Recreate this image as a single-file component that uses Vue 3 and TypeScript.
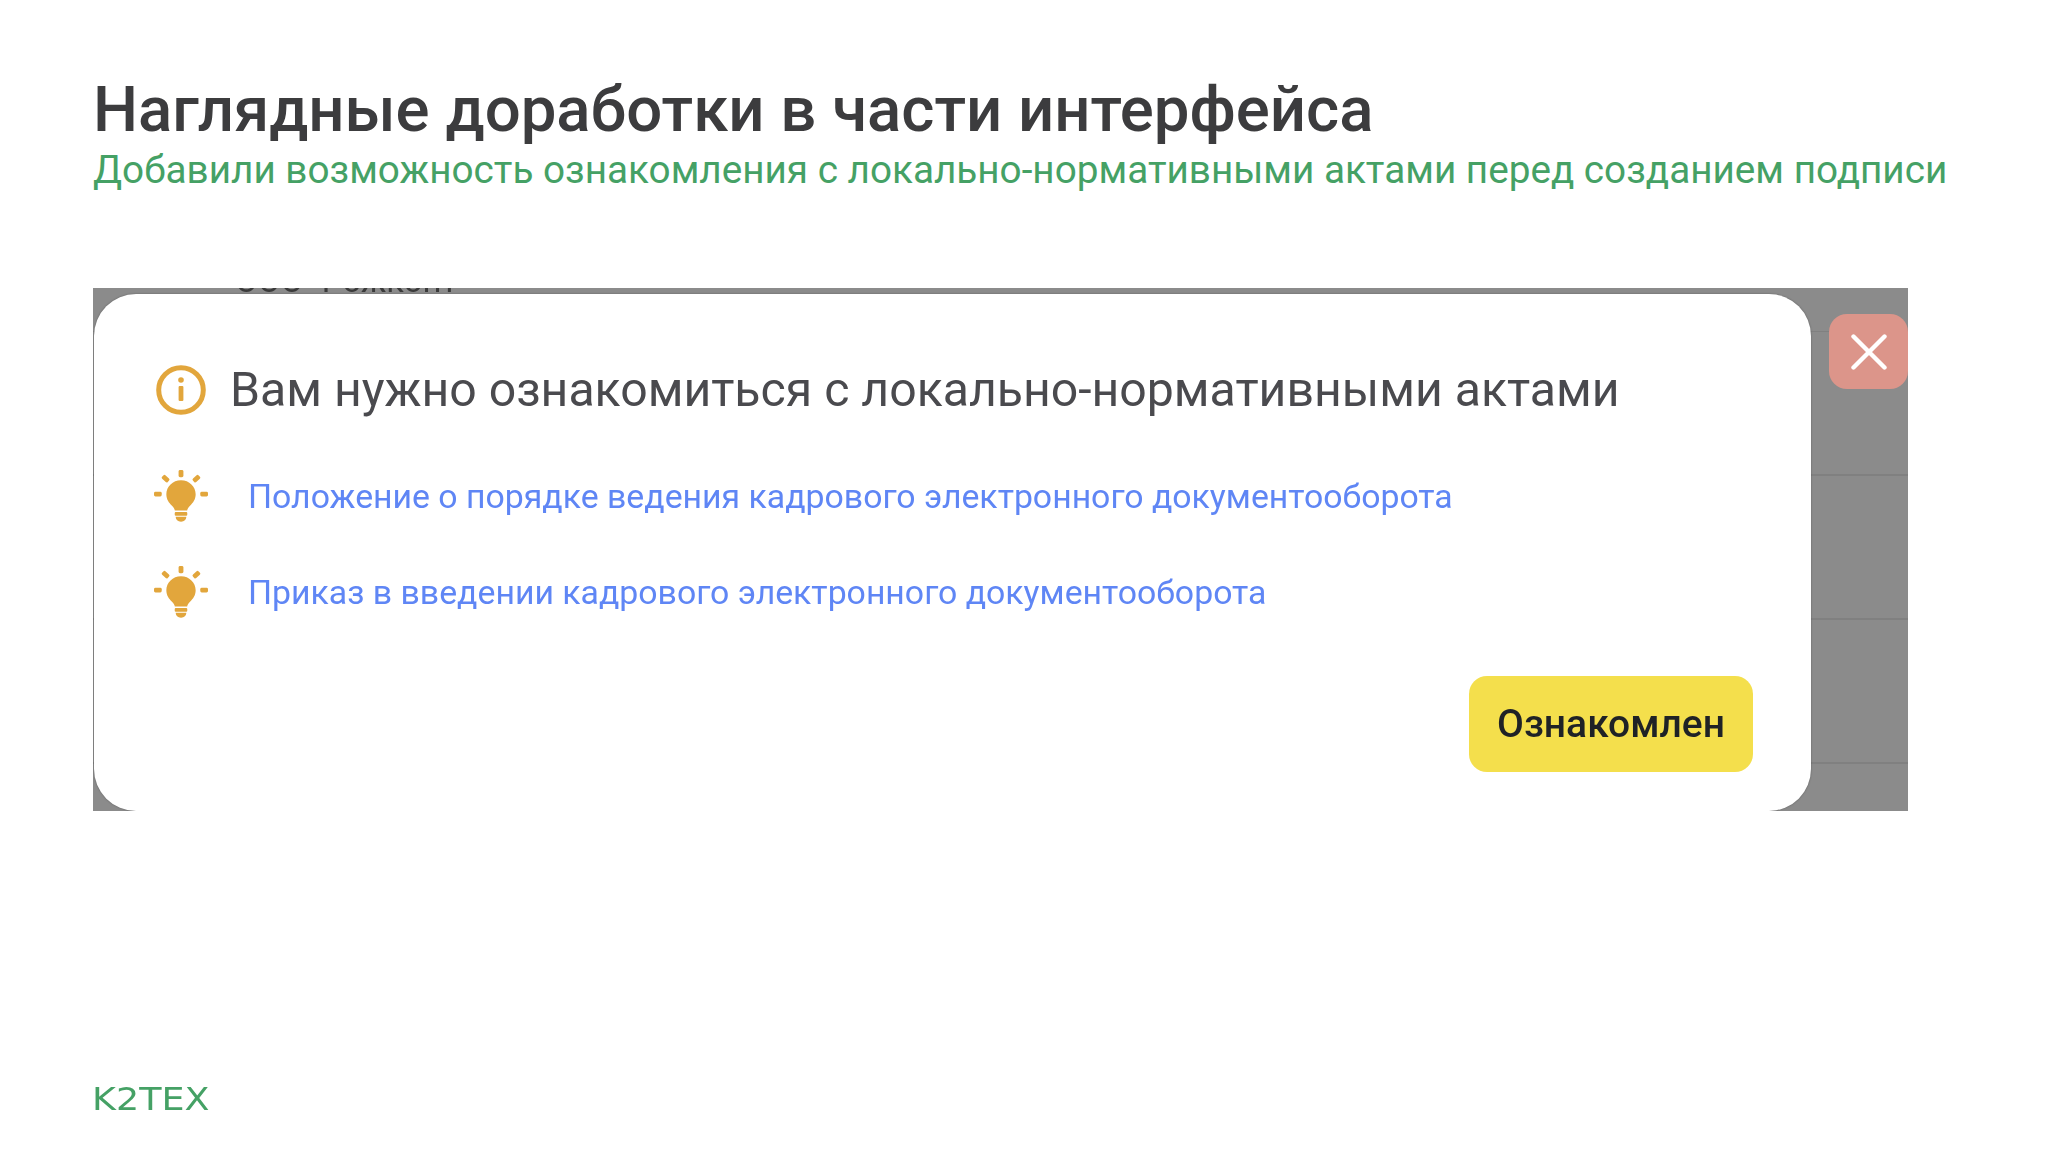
<script setup lang="ts">
const links: string[] = [
  'Положение о порядке ведения кадрового электронного документооборота',
  'Приказ в введении кадрового электронного документооборота',
]
</script>

<template>
  <main class="slide">
    <header class="head">
      <h1 class="title">Наглядные доработки в части интерфейса</h1>
      <p class="subtitle">Добавили возможность ознакомления с локально-нормативными актами перед созданием подписи</p>
    </header>

    <section class="shot">
      <div class="rows" aria-hidden="true">
        <div class="row row-first"><span class="clipped">ООО "Рожкопт"</span></div>
        <div class="row"></div>
        <div class="row"></div>
        <div class="row"></div>
      </div>

      <div class="modal">
        <div class="modal-head">
          <svg class="info" viewBox="0 0 50 50" fill="none">
            <circle cx="25" cy="25" r="22.300" stroke="#e2a63c" stroke-width="5" />
            <rect x="22.600" y="21" width="4.800" height="15" rx="1" fill="#e2a63c" />
            <circle cx="25" cy="15" r="2.800" fill="#e2a63c" />
          </svg>
          <h2 class="modal-title">Вам нужно ознакомиться с локально-нормативными актами</h2>
        </div>

        <ul class="links">
          <li v-for="link in links" :key="link" class="link-row">
            <svg class="bulb" viewBox="0 0 56 56" fill="#e2a63c">
              <path d="M28 10.500c-8.600 0-15.200 6.600-15.200 14.600 0 5.400 2.800 9 5.600 11.600 1.800 1.700 2.900 3.400 3.200 5.300h12.800c.3-1.900 1.400-3.600 3.200-5.300 2.800-2.600 5.600-6.200 5.600-11.600 0-8-6.600-14.600-15.200-14.600z" />
              <rect x="21.500" y="43.500" width="13" height="4" rx="1" />
              <path d="M22.500 48.600h11c0 2.800-2.200 5-5.500 5s-5.500-2.200-5.500-5z" />
              <rect x="25.500" y="0" width="5" height="7.500" rx="1.500" />
              <rect x="0" y="22.500" width="8" height="5" rx="1.500" />
              <rect x="48" y="22.500" width="8" height="5" rx="1.500" />
              <rect x="8" y="6.500" width="8" height="5" rx="1.500" transform="rotate(42 12 9)" />
              <rect x="40" y="6.500" width="8" height="5" rx="1.500" transform="rotate(-42 44 9)" />
            </svg>
            <a class="link">{{ link }}</a>
          </li>
        </ul>

        <div class="actions">
          <button class="confirm" type="button">Ознакомлен</button>
        </div>
      </div>

      <button class="close" type="button" aria-label="Закрыть">
        <svg viewBox="0 0 36 36" width="36" height="36" fill="none" stroke="#fff" stroke-width="4.400" stroke-linecap="round">
          <path d="M2.500 2.500l31 31M33.500 2.500l-31 31" />
        </svg>
      </button>
    </section>

    <footer class="logo"><span class="logo-text">K2TEX</span></footer>
  </main>
</template>

<style>
html, body { margin: 0; background: #fff; }
</style>

<style scoped>
.slide {
  width: 2064px;
  height: 1162px;
  box-sizing: border-box;
  padding: 74px 0 0 93px;
  background: #fff;
  display: flex;
  flex-direction: column;
  overflow: hidden;
}
.head { height: 214px; flex: none; }
.title {
  margin: 0;
  font: 500 63.500px/72px Roboto, sans-serif;
  color: #3c3c3e;
}
.subtitle {
  margin: 1px 0 0;
  font: 400 38.700px/46px Roboto, sans-serif;
  color: #45a165;
  white-space: nowrap;
}
.shot {
  position: relative;
  flex: none;
  width: 1815px;
  height: 523px;
  background: #8b8b8b;
  overflow: hidden;
  filter: blur(0.7px);
}
.rows { position: absolute; inset: 0; display: flex; flex-direction: column; }
.row { height: 144px; flex: none; border-bottom: 2px solid #808080; box-sizing: border-box; }
.row-first { height: 44px; padding-left: 142px; border-bottom-width: 1px; }
.clipped {
  display: block;
  font: 400 33px/30px Roboto, sans-serif;
  color: #3a3a3a;
  margin-top: -22px;
}
.modal {
  position: relative;
  box-sizing: border-box;
  width: 1717px;
  height: 517px;
  margin: 6px 0 0 1px;
  padding: 64px 58px 0 62px;
  background: #fff;
  border-radius: 42px;
  box-shadow: 0 0 2px rgba(0, 0, 0, .35);
}
.modal-head { display: flex; align-items: center; gap: 24px; height: 64px; }
.info { width: 50px; height: 50px; flex: none; }
.modal-title {
  margin: 0;
  font: 400 48.200px/64px Roboto, sans-serif;
  color: #4a4a4e;
  white-space: nowrap;
}
.links { list-style: none; margin: 48px 0 0 -3px; padding: 0; display: flex; flex-direction: column; gap: 42px; }
.link-row { display: flex; align-items: center; gap: 39px; height: 54px; }
.bulb { width: 56px; height: 54px; flex: none; }
.link {
  font: 400 33.800px/54px Roboto, sans-serif;
  color: #5f86f5;
  white-space: nowrap;
}
.actions { display: flex; justify-content: flex-end; margin-top: 56px; }
.confirm {
  width: 284px;
  height: 96px;
  border: 0;
  padding: 0;
  border-radius: 18px;
  background: #f4df4c;
  color: #1f2226;
  font: 500 39px/96px Roboto, sans-serif;
}
.close {
  position: absolute;
  left: 1736px;
  top: 26px;
  width: 79px;
  height: 75px;
  padding: 0;
  border: 0;
  border-radius: 18px;
  background: #dc958a;
  display: flex;
  align-items: center;
  justify-content: center;
}
.logo { margin: 268px 0 0 -1px; height: 40px; }
.logo-text {
  display: inline-block;
  font: 400 32px/40px "DejaVu Sans", sans-serif;
  color: #45a165;
  transform: scaleX(1.14);
  transform-origin: left center;
}
</style>
